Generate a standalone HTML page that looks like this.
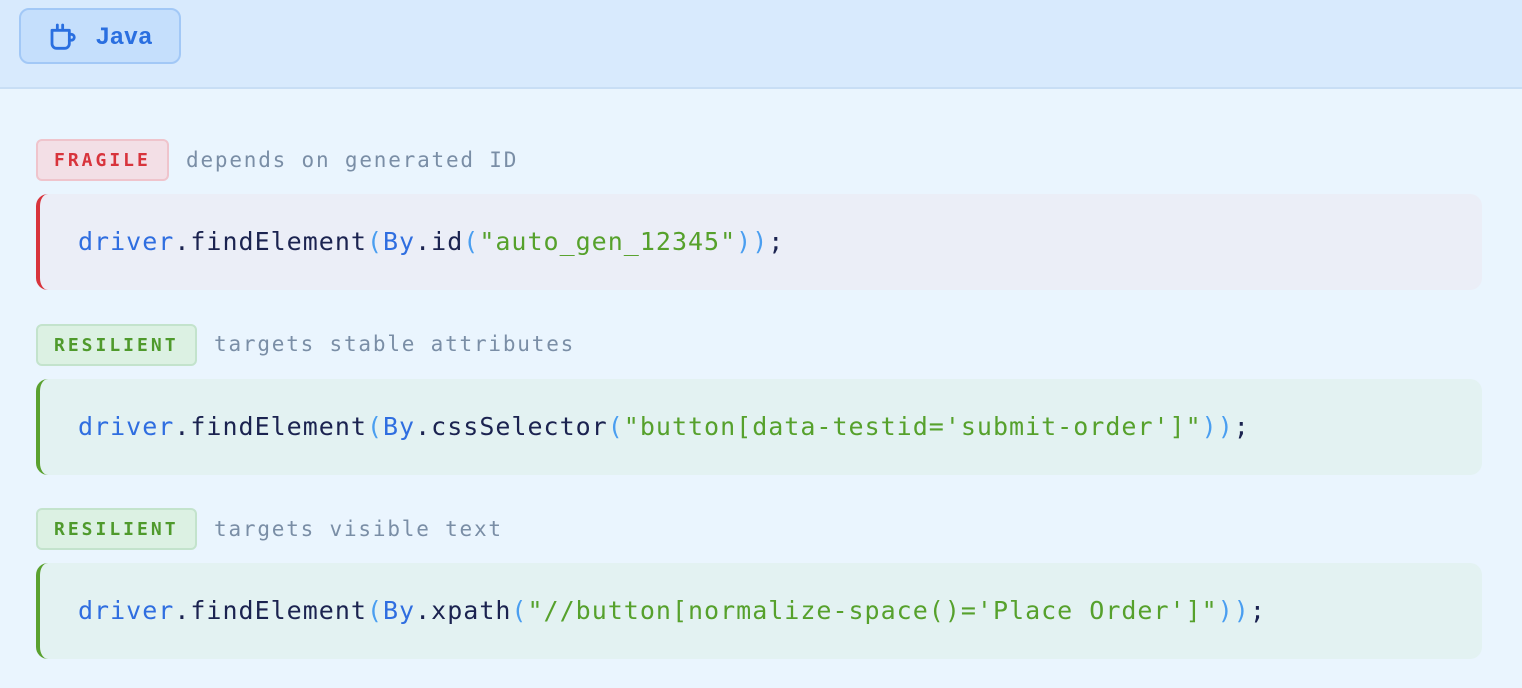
<!DOCTYPE html>
<html><head><meta charset="utf-8"><style>
*{margin:0;padding:0;box-sizing:border-box}
body{width:1522px;height:688px;background:#eaf5fe;font-family:"DejaVu Sans Mono","Liberation Mono",monospace;position:relative;overflow:hidden}
.hdr{position:absolute;left:0;top:0;width:1522px;height:89px;background:#d8eafd;border-bottom:2px solid #c8def5}
.btn{position:absolute;left:19px;top:8px;width:162px;height:56px;border-radius:10px;background:#c5dffc;border:2px solid #a2c8f6;color:#2a6fe0;font-family:"Liberation Sans",sans-serif;font-weight:bold;font-size:24px}
.btn svg{position:absolute;left:27px;top:11px}
.btn span{position:absolute;left:75px;top:13px;letter-spacing:0.8px}
.badge{position:absolute;left:36px;height:42px;border-radius:6px;font-weight:bold;font-size:18px;letter-spacing:3px;line-height:40px;padding-left:16px}
.red{background:#f3dfe6;border:2px solid #efc4cc;color:#d8343c}
.grn{background:#dcf1e3;border:2px solid #c3e3cc;color:#4f9a2c}
.desc{position:absolute;font-size:21px;color:#7a8ea6;letter-spacing:1.8px;line-height:42px}
.code{position:absolute;left:36px;width:1446px;height:96px;border-radius:12px;font-size:25px;letter-spacing:1px;line-height:96px;padding-left:38px;color:#1b2350;white-space:pre}
.cr{background:#ebeef7;border-left:4px solid #d8343c}
.cg{background:#e3f2f2;border-left:4px solid #5aa12f}
.b{color:#2f6ee0}.p{color:#4a9ef0}.s{color:#56a12c}
</style></head><body>
<div class="hdr"><div class="btn"><svg width="32" height="32" viewBox="0 0 24 24" fill="none" stroke="#2a6fe0" stroke-width="2.1" stroke-linecap="round" stroke-linejoin="round"><path d="M3 7h13v10a3.5 3.5 0 0 1-3.5 3.5h-6A3.5 3.5 0 0 1 3 17z"/><path d="M16 10h1.5a2.2 2.2 0 0 1 0 4.4H16"/><path d="M7 3v2.5M11 3v2.5"/></svg><span>Java</span></div></div>

<div class="badge red" style="top:139px;width:133px">FRAGILE</div>
<div class="desc" style="left:186px;top:139px">depends on generated ID</div>
<div class="code cr" style="top:194px"><span class="b">driver</span>.findElement<span class="p">(</span><span class="b">By</span>.id<span class="p">(</span><span class="s">"auto_gen_12345"</span><span class="p">))</span>;</div>

<div class="badge grn" style="top:324px;width:161px">RESILIENT</div>
<div class="desc" style="left:214px;top:323px">targets stable attributes</div>
<div class="code cg" style="top:379px"><span class="b">driver</span>.findElement<span class="p">(</span><span class="b">By</span>.cssSelector<span class="p">(</span><span class="s">"button[data-testid='submit-order']"</span><span class="p">))</span>;</div>

<div class="badge grn" style="top:508px;width:161px">RESILIENT</div>
<div class="desc" style="left:214px;top:508px">targets visible text</div>
<div class="code cg" style="top:563px"><span class="b">driver</span>.findElement<span class="p">(</span><span class="b">By</span>.xpath<span class="p">(</span><span class="s">"//button[normalize-space()='Place Order']"</span><span class="p">))</span>;</div>
</body></html>
